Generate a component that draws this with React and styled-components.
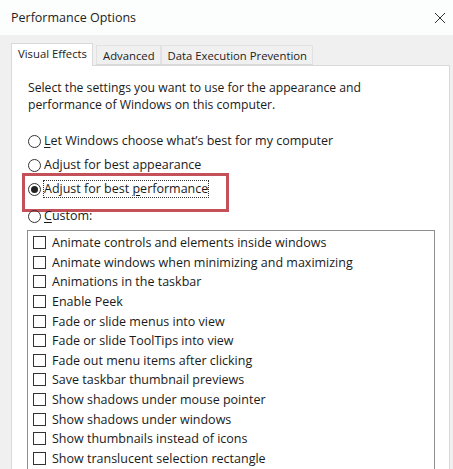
import styled, { createGlobalStyle } from 'styled-components'

const GlobalStyle = createGlobalStyle`
    html, body {
        margin: 0;
        padding: 0;
        background: #f0f0f0;
    }
    * { box-sizing: border-box; }
`;

const effects = [
    'Animate controls and elements inside windows',
    'Animate windows when minimizing and maximizing',
    'Animations in the taskbar',
    'Enable Peek',
    'Fade or slide menus into view',
    'Fade or slide ToolTips into view',
    'Fade out menu items after clicking',
    'Save taskbar thumbnail previews',
    'Show shadows under mouse pointer',
    'Show shadows under windows',
    'Show thumbnails instead of icons',
    'Show translucent selection rectangle',
];

const options = [
    { key: 'L', rest: 'et Windows choose what\u2019s best for my computer' },
    { key: '', rest: 'Adjust for best appearance' },
    { key: '', rest: 'Adjust for best ', tail: 'p', after: 'erformance', checked: true },
    { key: 'C', rest: 'ustom:', spaced: true },
];

export default function App() {
    return (
        <Window>
            <GlobalStyle />
            <TitleBar>
                <Title>Performance Options</Title>
                <CloseIcon viewBox="0 0 12 12">
                    <path d="M1 1 L11 11 M11 1 L1 11" stroke="#333" strokeWidth="1" fill="none" />
                </CloseIcon>
            </TitleBar>
            <Body>
                <Tabs>
                    <Tab active>Visual Effects</Tab>
                    <Tab>Advanced</Tab>
                    <Tab>Data Execution Prevention</Tab>
                </Tabs>
                <Panel>
                    <Intro>
                        Select the settings you want to use for the appearance and<br />
                        performance of Windows on this computer.
                    </Intro>
                    <Radios>
                        {options.map((o, i) => (
                            <RadioRow key={i} highlight={o.checked} spaced={o.spaced}>
                                <RadioDot checked={o.checked} />
                                <RadioLabel focused={o.checked}>
                                    {o.key && <u>{o.key}</u>}
                                    {o.rest}
                                    {o.tail && <u>{o.tail}</u>}
                                    {o.after}
                                </RadioLabel>
                            </RadioRow>
                        ))}
                    </Radios>
                    <ListBox>
                        {effects.map((e, i) => (
                            <CheckRow key={i}>
                                <CheckBox />
                                <span>{e}</span>
                            </CheckRow>
                        ))}
                    </ListBox>
                </Panel>
            </Body>
        </Window>
    )
}

const Window = styled.div`
    width: 453px;
    height: 469px;
    overflow: hidden;
    background: #f0f0f0;
    font-family: "Open Sans", "Noto Sans", sans-serif;
    color: #1a1a1a;
`;

const TitleBar = styled.div`
    height: 35px;
    background: #fcfefe;
    display: flex;
    align-items: center;
    justify-content: space-between;
    padding: 0 6px 0 11px;
`;

const Title = styled.div`
    font-size: 12.5px;
    color: #222;
`;

const CloseIcon = styled.svg`
    width: 12px;
    height: 12px;
    margin-right: 1px;
`;

const Body = styled.div`
    padding: 8px 3px 0 11px;
`;

const Tabs = styled.div`
    display: flex;
    align-items: flex-end;
    height: 22px;
    position: relative;
    z-index: 1;
`;

const Tab = styled.div`
    height: ${({ active }) => (active ? '23px' : '20px')};
    margin-bottom: ${({ active }) => (active ? '-1px' : '0')};
    margin-right: ${({ active }) => (active ? '3px' : '0')};
    padding: 2px 5px 0 6px;
    background: ${({ active }) => (active ? '#fff' : '#f0f0f0')};
    border: 1px solid ${({ active }) => (active ? '#d9d9d9' : '#e2e2e2')};
    border-bottom: ${({ active }) => (active ? 'none' : '1px solid #d9d9d9')};
    font-size: 11.3px;
    line-height: 16px;
    color: #222;
    white-space: nowrap;
`;

const Panel = styled.div`
    background: #fff;
    border: 1px solid #d9d9d9;
    height: 420px;
    padding: 13px 0 0 16px;
`;

const Intro = styled.div`
    font-size: 12.2px;
    line-height: 17px;
    margin-bottom: 19px;
`;

const Radios = styled.div`
    display: flex;
    flex-direction: column;
    gap: 6px;
    margin-bottom: 5px;
`;

const RadioRow = styled.div`
    position: relative;
    display: flex;
    align-items: center;
    gap: 3px;
    height: 18px;
    margin-top: ${({ spaced }) => (spaced ? '3px' : '0')};
    font-size: 12.5px;

    &::before {
        content: '';
        display: ${({ highlight }) => (highlight ? 'block' : 'none')};
        position: absolute;
        left: -6px;
        top: -7px;
        width: 201px;
        height: 33px;
        border: 3px solid #c4505a;
    }
`;

const RadioDot = styled.span`
    width: 13px;
    height: 13px;
    border-radius: 50%;
    border: 1px solid #333;
    display: flex;
    align-items: center;
    justify-content: center;
    flex-shrink: 0;

    &::after {
        content: '';
        display: ${({ checked }) => (checked ? 'block' : 'none')};
        width: 7px;
        height: 7px;
        border-radius: 50%;
        background: #222;
    }
`;

const RadioLabel = styled.span`
    white-space: nowrap;
    outline: ${({ focused }) => (focused ? '1px dotted #333' : 'none')};
    line-height: 16px;
    u { text-decoration-thickness: 1px; text-underline-offset: 2px; }
`;

const ListBox = styled.div`
    width: 408px;
    height: 260px;
    margin-left: -1px;
    border: 1px solid #8e8e8e;
    padding: 2px 0 0 5px;
    display: flex;
    flex-direction: column;
`;

const CheckRow = styled.div`
    display: flex;
    align-items: center;
    gap: 6px;
    height: 19.6px;
    font-size: 12.5px;
    white-space: nowrap;
`;

const CheckBox = styled.span`
    width: 13px;
    height: 13px;
    border: 1px solid #333;
    flex-shrink: 0;
`;
